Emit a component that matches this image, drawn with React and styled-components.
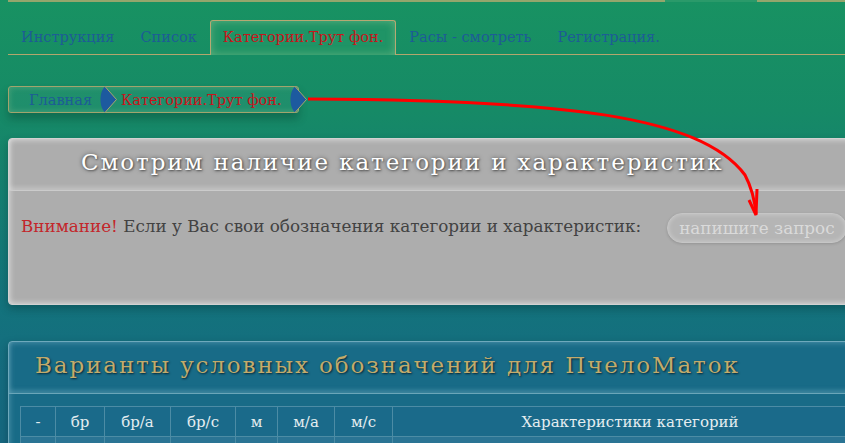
import React from "react";
import styled, { createGlobalStyle } from "styled-components";

const GlobalStyle = createGlobalStyle`
  html, body {
    margin: 0;
    padding: 0;
    overflow: hidden;
  }
  body {
    font-family: "DejaVu Serif", "Liberation Serif", serif;
  }
`;

const Page = styled.div`
  position: relative;
  height: 100vh;
  overflow: hidden;
  padding: 0 0 0 8px;
  box-sizing: border-box;
  background: linear-gradient(
    to bottom,
    #189262 0%,
    #168a66 25%,
    #157f72 45%,
    #13737c 68%,
    #156c80 85%,
    #166880 100%
  );
`;

const Wrap = styled.div`
  width: 900px;
`;

const TopLine = styled.div`
  height: 2px;
  display: flex;
  background: #94a66c;
`;

const TopGap = styled.span`
  margin-left: 657px;
  width: 92px;
  background: #2a9a6a;
`;

const Tabs = styled.nav`
  display: flex;
  align-items: flex-end;
  margin-top: 18px;
  height: 34px;
  border-bottom: 1px solid #b3a66d;
`;

const Tab = styled.a`
  display: flex;
  align-items: center;
  box-sizing: border-box;
  height: 35px;
  padding: 0 12px 2px;
  margin-bottom: -1px;
  font-size: 14.5px;
  color: ${(p) => (p.$active ? "#c8141c" : "#1d5c96")};
  border: 1px solid ${(p) => (p.$active ? "#b7a973" : "transparent")};
  border-bottom: none;
  border-radius: 3px 3px 0 0;
  background: ${(p) => (p.$active ? "#1f9466" : "transparent")};
  box-shadow: ${(p) =>
    p.$active ? "inset 0 0 8px rgba(220, 230, 170, 0.35)" : "none"};
  text-decoration: none;
  white-space: nowrap;
`;

const Crumbs = styled.div`
  display: inline-flex;
  align-items: center;
  margin-top: 31px;
  height: 27px;
  box-sizing: border-box;
  padding-left: 20px;
  border: 1px solid #a2a46d;
  border-radius: 3px;
  background: rgba(255, 255, 255, 0.04);
  box-shadow: inset 0 0 6px rgba(220, 230, 170, 0.25),
    0 6px 8px rgba(0, 40, 30, 0.3);
`;

const Crumb = styled.span`
  display: flex;
  align-items: center;
  gap: 8px;
  margin-right: 4px;
  font-size: 14.5px;
  color: ${(p) => (p.$current ? "#c8141c" : "#1d5c96")};
  white-space: nowrap;
  &:last-child {
    margin-right: -9px;
  }
`;

const Arrow = () => (
  <svg width="17" height="27" viewBox="0 0 17 27">
    <path d="M5 0.5 L16.5 13.5 L5 26.5 C-1 21 -1 6 5 0.5 Z" fill="#1d5a9f" />
    <path
      d="M5 0.5 L16.5 13.5 L5 26.5"
      fill="none"
      stroke="#a8a56e"
      strokeWidth="1"
    />
  </svg>
);

const Panel = styled.section`
  margin-top: ${(p) => p.$top}px;
  box-sizing: border-box;
  border-radius: 4px;
  border: 1px solid ${(p) => (p.$dark ? "#6ea9bc" : "#d2d2d2")};
  background: ${(p) => (p.$dark ? "#186b87" : "#adadad")};
  box-shadow: ${(p) =>
    p.$dark
      ? "inset 0 0 6px rgba(170, 215, 230, 0.45), 0 4px 8px rgba(0, 30, 40, 0.35)"
      : "inset 0 0 6px rgba(255, 255, 255, 0.7), 0 4px 8px rgba(0, 30, 30, 0.3)"};
  min-height: ${(p) => p.$height || 0}px;
`;

const PanelHead = styled.header`
  height: 52px;
  box-sizing: border-box;
  display: flex;
  align-items: center;
  padding: 0 0 5px ${(p) => p.$indent}px;
  border-bottom: 1px solid ${(p) => (p.$dark ? "#6aa6b9" : "#cbcbcb")};
  box-shadow: ${(p) =>
    p.$dark
      ? "inset 0 -3px 4px rgba(170, 215, 230, 0.25)"
      : "inset 0 -3px 4px rgba(255, 255, 255, 0.25)"};
`;

const Title = styled.h2`
  margin: 0;
  font-weight: normal;
  font-size: 23px;
  letter-spacing: 1.9px;
  white-space: nowrap;
  color: ${(p) => (p.$gold ? "#c2ab6c" : "#ffffff")};
  text-shadow: ${(p) =>
    p.$gold
      ? "1px 1px 2px rgba(0, 20, 30, 0.8)"
      : "0 0 4px rgba(0, 0, 0, 0.55), 1px 1px 2px rgba(0, 0, 0, 0.4)"};
`;

const Notice = styled.div`
  display: flex;
  align-items: center;
  gap: 26px;
  padding: 17px 12px;
`;

const NoticeText = styled.p`
  margin: 0;
  font-size: 16.8px;
  color: #424242;
  white-space: nowrap;
`;

const Warn = styled.span`
  color: #c3262a;
`;

const RequestButton = styled.button`
  height: 30px;
  padding: 0 11px;
  margin-top: 5px;
  border-radius: 15px;
  border: 1px solid #c6c6c6;
  background: #b5b5b5;
  color: #dadada;
  font-family: "DejaVu Serif", "Liberation Serif", serif;
  font-size: 16.8px;
  box-shadow: inset 0 0 5px rgba(255, 255, 255, 0.35),
    0 1px 3px rgba(0, 0, 0, 0.15);
  white-space: nowrap;
`;

const TableBox = styled.div`
  padding: 12px 0 0 11px;
`;

const Table = styled.table`
  border-collapse: collapse;
  table-layout: fixed;
  width: 848px;
  font-size: 15px;
  color: #e4edf0;
`;

const Th = styled.th`
  height: 29px;
  width: ${(p) => (p.$w ? `${p.$w}px` : "auto")};
  padding: 0;
  font-weight: normal;
  border: 1px solid #4c8ca5;
  background: #1a6a8a;
`;

const Td = styled.td`
  height: 29px;
  border: 1px solid #4c8ca5;
  background: #2a7494;
`;

const Overlay = styled.svg`
  position: absolute;
  top: 0;
  left: 0;
  pointer-events: none;
`;

const columns = [
  { label: "-", w: 34 },
  { label: "бр", w: 48 },
  { label: "бр/а", w: 65 },
  { label: "бр/с", w: 64 },
  { label: "м", w: 41 },
  { label: "м/а", w: 56 },
  { label: "м/с", w: 57 },
  { label: "Характеристики категорий" },
];

export default function App() {
  return (
    <>
      <GlobalStyle />
      <Page>
        <Wrap>
          <TopLine>
            <TopGap />
          </TopLine>
          <Tabs>
            <Tab>Инструкция</Tab>
            <Tab>Список</Tab>
            <Tab $active>Категории.Трут фон.</Tab>
            <Tab>Расы - смотреть</Tab>
            <Tab>Регистрация.</Tab>
          </Tabs>

          <Crumbs>
            <Crumb>
              Главная <Arrow />
            </Crumb>
            <Crumb $current>
              Категории.Трут фон. <Arrow />
            </Crumb>
          </Crumbs>

          <Panel $top={25} $height={167}>
            <PanelHead $indent={72}>
              <Title>Смотрим наличие категории и характеристик</Title>
            </PanelHead>
            <Notice>
              <NoticeText>
                <Warn>Внимание!</Warn> Если у Вас свои обозначения категории и
                характеристик:
              </NoticeText>
              <RequestButton>напишите запрос</RequestButton>
            </Notice>
          </Panel>

          <Panel $top={36} $dark $height={200}>
            <PanelHead $indent={26} $dark>
              <Title $gold>Варианты условных обозначений для ПчелоМаток</Title>
            </PanelHead>
            <TableBox>
              <Table>
                <thead>
                  <tr>
                    {columns.map((c) => (
                      <Th key={c.label} $w={c.w}>
                        {c.label}
                      </Th>
                    ))}
                  </tr>
                </thead>
                <tbody>
                  <tr>
                    {columns.map((c) => (
                      <Td key={c.label} />
                    ))}
                  </tr>
                </tbody>
              </Table>
            </TableBox>
          </Panel>
        </Wrap>

        <Overlay width="845" height="443" viewBox="0 0 845 443">
          <path
            d="M308 99 C560 100 700 115 745 175 Q754 192 756 214"
            fill="none"
            stroke="#ff0000"
            strokeWidth="3"
          />
          <path
            d="M749 200 L756 215 L757 189"
            fill="none"
            stroke="#ff0000"
            strokeWidth="3"
            strokeLinejoin="miter"
          />
        </Overlay>
      </Page>
    </>
  );
}
